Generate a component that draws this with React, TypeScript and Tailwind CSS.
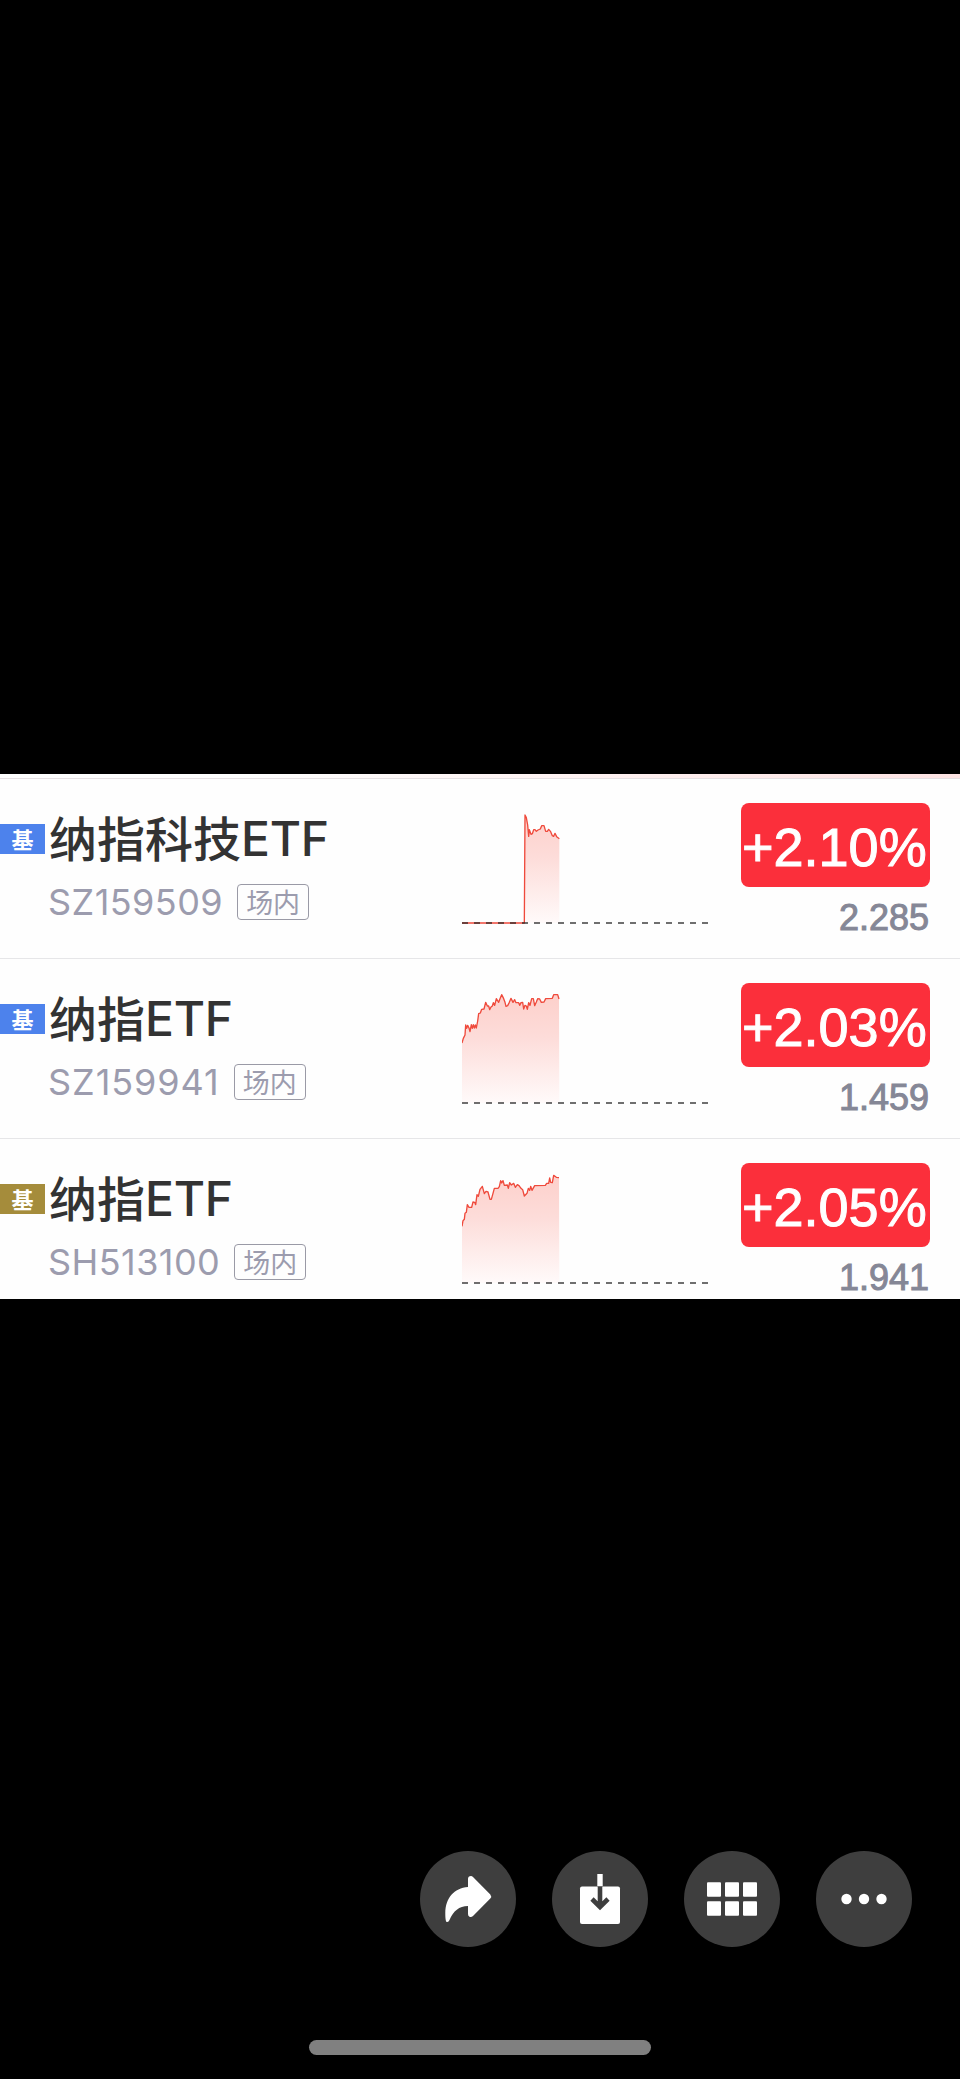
import type { ReactNode } from 'react';
import clsx from 'clsx';

type Fund = {
  name: string;
  code: string;
  codeTracking: string;
  market: 'SZ' | 'SH';
  change: string;
  price: string;
  points: string;
};

// Chart points use a 738 x 378 box, the previous close sits at y = 372
const funds: Fund[] = [
  {
    name: '纳指科技',
    code: 'SZ159509',
    codeTracking: 'tracking-[0.45px]',
    market: 'SZ',
    change: '+2.10%',
    price: '2.285',
    points:
      '0,372 187,372 189,48 193,56 197,78 200,112 202,92 207,106 211,104 215,92 219,92 223,97 228,93 235,90 239,80 246,80 251,97 256,97 260,91 266,98 271,110 275,112 279,103 284,113 292,119',
  },
  {
    name: '纳指',
    code: 'SZ159941',
    codeTracking: 'tracking-[0.95px]',
    market: 'SZ',
    change: '+2.03%',
    price: '1.459',
    points:
      '0,192 4,178 9,168 11,138 14,148 17,139 21,147 24,158 28,137 31,148 34,137 37,147 40,138 43,147 47,126 50,104 55,102 59,91 66,90 71,70 76,81 80,81 83,92 87,84 91,81 94,71 98,79 103,59 110,70 114,59 119,47 125,59 129,70 132,82 137,80 142,70 147,58 153,70 158,62 162,71 170,71 173,79 177,71 182,70 185,90 189,79 193,81 196,91 200,71 204,79 209,59 214,59 218,80 223,69 227,59 233,60 238,70 246,69 251,59 271,58 275,47 287,47 291,60',
  },
  {
    name: '纳指',
    code: 'SH513100',
    codeTracking: 'tracking-[0.45px]',
    market: 'SH',
    change: '+2.05%',
    price: '1.941',
    points:
      '0,202 3,185 7,181 9,163 13,160 16,137 21,145 29,145 33,129 38,130 41,137 45,107 49,112 54,91 61,82 67,104 72,97 78,99 84,121 88,121 93,103 97,88 108,88 112,83 116,65 119,72 123,65 127,79 136,78 139,88 143,71 148,78 155,73 160,85 166,77 171,80 177,88 182,92 187,111 195,103 199,88 203,94 206,82 210,94 218,80 250,79 254,73 260,73 263,57 266,70 271,71 275,49 283,55 291,56',
  },
];

function Sparkline({ id, points }: { id: string; points: string }) {
  return (
    <svg className="mt-5 h-[126px] w-[246px] shrink-0" viewBox="0 0 738 378" fill="none">
      <defs>
        <linearGradient id={id} x1="0" y1="40" x2="0" y2="372" gradientUnits="userSpaceOnUse">
          <stop offset="0" stopColor="#fdcfca" />
          <stop offset="0.4" stopColor="#fddcd9" />
          <stop offset="1" stopColor="#fffafa" />
        </linearGradient>
      </defs>
      <polygon points={`${points} 292,372 0,372`} fill={`url(#${id})`} />
      <polyline points={points} stroke="#ef4a3c" strokeWidth="4" strokeLinejoin="round" />
      <path d="M0 372H738" stroke="#222" strokeOpacity="0.65" strokeWidth="6" strokeDasharray="18 18" />
    </svg>
  );
}

function FundRow({ fund }: { fund: Fund }) {
  return (
    <div className="flex h-[180px] shrink-0 items-start border-b border-[#e6e6e8] pr-[30px]">
      <div
        className={clsx(
          'mt-[45px] flex h-[30px] w-[45px] shrink-0 items-center justify-center pb-[3px] text-[22px] leading-none font-bold text-white',
          fund.market === 'SZ' ? 'bg-[#4d82ec]' : 'bg-[#a58c3b]',
        )}
      >
        基
      </div>
      <div className="w-[417px] shrink-0 pl-[3px]">
        <div className="mt-[25px] flex h-[66px] items-center pl-px text-[48px] leading-none font-medium whitespace-nowrap text-[#333]">
          <span className="pb-[2px]">{fund.name}</span>
          <span className="pt-1 font-[Inter] tracking-[-0.3px]">ETF</span>
        </div>
        <div className="mt-[14px] flex h-9 items-center text-[#9c9cae]">
          <span className={clsx('font-[Inter] text-[36px] leading-none', fund.codeTracking)}>{fund.code}</span>
          <span className="ml-[14px] flex h-9 w-[72px] items-center justify-center rounded-[4px] border border-[#9a9aa6] pb-px text-[27px] leading-none">
            场内
          </span>
        </div>
      </div>
      <Sparkline id={fund.code} points={fund.points} />
      <div className="mt-6 ml-auto flex w-[189px] flex-col items-end font-['Liberation_Sans',sans-serif]">
        <div className="flex h-[84px] w-full items-center justify-start rounded-lg bg-[#fb2f3b] pt-[3px] pl-px text-[54px] leading-none whitespace-nowrap text-white [-webkit-text-stroke:1px_white]">
          {fund.change}
        </div>
        <div className="mt-[11px] pr-px text-[36px] leading-10 text-[#858796] [-webkit-text-stroke:1px_#858796]">
          {fund.price}
        </div>
      </div>
    </div>
  );
}

function RoundButton({ label, children }: { label: string; children: ReactNode }) {
  return (
    <button type="button" aria-label={label} className="size-24 rounded-full bg-[#3e3e3e]">
      <svg className="size-24" viewBox="0 0 96 96" fill="#fff">
        {children}
      </svg>
    </button>
  );
}

export default function App() {
  return (
    <div className="flex h-[2079px] w-[960px] flex-col bg-black font-['Noto_Sans_CJK_SC',sans-serif]">
      <div className="mt-[774px] flex h-[525px] shrink-0 flex-col overflow-hidden bg-[#fefefe]">
        <div className="h-[5px] shrink-0 border-b border-[#e6e0e3] bg-linear-to-r from-white from-25% to-[#fde3e3]" />
        {funds.map((fund) => (
          <FundRow key={fund.code} fund={fund} />
        ))}
      </div>

      <div className="mt-[552px] flex justify-end gap-9 pr-12">
        <RoundButton label="转发">
          <path d="M48 28Q48 25 51 25Q52 25 53 26L70.300 43.500Q72 45.500 70.300 47.500L53 65Q51.500 66.500 49.500 65.800Q48 65 48 63V55C39 55 33.500 60 29.500 69Q28.500 71.500 26.800 71C25.500 70.500 25.300 66 25.300 62C25.500 47 34 37 48 36Z" />
        </RoundButton>
        <RoundButton label="保存">
          <rect x="45.300" y="23" width="5.400" height="12" />
          <rect x="28" y="35.500" width="40" height="37.500" rx="2" />
          <path d="M48 35.500V55M40 48L48 56L56 48" fill="none" stroke="#3e3e3e" strokeWidth="4.600" />
        </RoundButton>
        <RoundButton label="全部图片">
          {[31.3, 50.3].map((y) =>
            [23, 41, 59].map((x) => <rect key={`${x}-${y}`} x={x} y={y} width="14" height="14.500" rx="1" />),
          )}
        </RoundButton>
        <RoundButton label="更多">
          <circle cx="30.500" cy="48" r="5.200" />
          <circle cx="48" cy="48" r="5.200" />
          <circle cx="65.500" cy="48" r="5.200" />
        </RoundButton>
      </div>

      <div className="mx-auto mt-[93px] h-[15px] w-[342px] rounded-full bg-[#808080]" />
    </div>
  );
}
